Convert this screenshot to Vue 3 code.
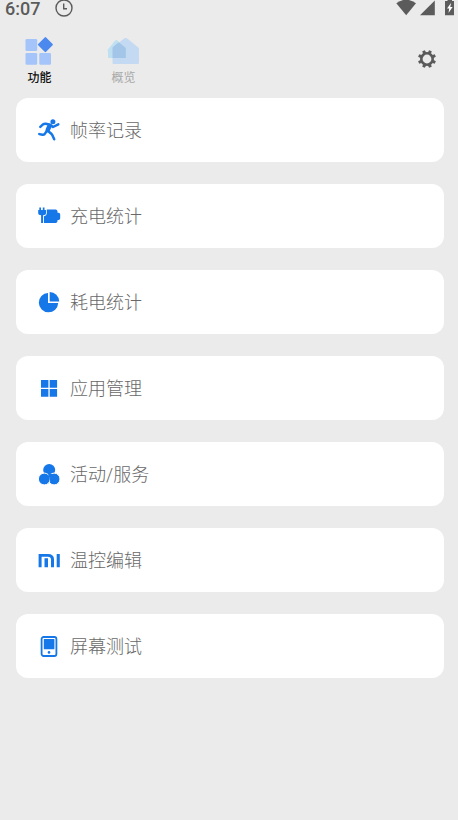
<template>
  <div class="screen">
    <header class="status-bar">
      <span class="time">6:07</span>
      <svg class="clock" width="18" height="18" viewBox="0 0 18 18">
        <circle cx="9" cy="8" r="8" />
        <path d="M8.7 3.5V8.8H12" />
      </svg>
      <svg class="signals" width="62" height="18" viewBox="0 0 62 18">
        <path d="M0.3 3.2Q10 -3.8 20 3.2L10.2 15.3Z" />
        <path d="M24 15.2L38.8 0.5V15.2Z" />
        <path d="M49 1H51.5V0H56V1H58V15.2H49Z" />
        <path class="bolt" d="M55.2 2.8L51 8.4H53.2L52.5 12.9L56.6 6.9H54.2Z" />
      </svg>
    </header>

    <nav class="tabs">
      <button
        v-for="tab in tabs"
        :key="tab.id"
        class="tab"
        :class="{ active: current === tab.id }"
        @click="current = tab.id"
      >
        <svg v-if="tab.id === 'features'" width="32" height="30" viewBox="0 0 32 30">
          <g fill="#a5c4fa">
            <rect x="2.5" y="4" width="11.7" height="12" rx="1.3" />
            <rect x="2.5" y="18" width="11.7" height="11.7" rx="1.3" />
            <rect x="16.3" y="18" width="11.7" height="11.7" rx="1.3" />
          </g>
          <rect x="16.8" y="4" width="11.2" height="11.2" rx="1" transform="rotate(45 22.4 9.6)" fill="#4b89ef" />
        </svg>
        <svg v-else width="32" height="30" viewBox="0 0 32 30">
          <path d="M0.3 15.2L8.2 5.6Q9.3 4.5 10.4 5.6L18.8 13V23H1.8Q1 23 1 22V15.8Z" fill="#bfe0f1" />
          <path d="M5.3 12.6L17.5 3.3Q18.7 2.5 19.9 3.3L31.6 12.8Q32 13.2 32 14V28Q32 29 31 29H6.5Q5.5 29 5.5 28V14Z" fill="#c3daf2" />
          <path d="M5.5 12.6L10.8 8Q11.8 7.2 12.8 8L18.8 13V23H5.5Z" fill="#a3c5e7" />
        </svg>
        <span>{{ tab.name }}</span>
      </button>

      <svg class="settings" width="20" height="20" viewBox="0 0 20 20">
        <circle cx="10" cy="10" r="5.7" />
        <path
          v-for="n in 8"
          :key="n"
          d="M8.6 1H11.4L11.7 4H8.3Z"
          :transform="`rotate(${n * 45 + 22.5} 10 10)`"
        />
      </svg>
    </nav>

    <main class="list">
      <div v-for="item in items" :key="item.icon" class="card">
        <svg class="icon" width="24" height="24" viewBox="0 0 24 24">
          <template v-if="item.icon === 'run'">
            <circle cx="15.9" cy="3.8" r="2.5" />
            <path class="line" d="M3.3 8.8L6 6.3Q7.2 5.6 8.8 5.8L13.2 6.7L16 9L21.3 6.3" />
            <path class="line thick" d="M12.5 8L10.7 12" />
            <path class="line" d="M9.8 13L7.6 16.1Q6.8 17 5.5 16.8L2.3 16.1M10.7 12.8L14.3 15.8Q15 16.4 15.4 17.3L17.2 21.3" />
          </template>
          <template v-else-if="item.icon === 'charge'">
            <path d="M2.3 3.6H4V6H5.8V3.6H7.5V6H9V9.5Q9 11 6.1 11.3V19H4.1V11.3Q1.2 11 1.2 9.5V6H2.3Z" />
            <path d="M9.8 5.5H18.7Q20.2 5.5 20.5 7.2V8.7H21.5Q23.2 9 23.2 10.5V14.3Q23.2 15.7 21.5 16H20.5V17.2Q20.2 18.9 18.7 18.9H7V12.3Q9.8 11.7 9.8 9.5Z" />
          </template>
          <template v-else-if="item.icon === 'pie'">
            <path d="M11 2.9A9.7 9.7 0 1 0 21.2 13H11Z" />
            <path d="M12.7 2A9.7 9.7 0 0 1 22.2 11.5H12.7Z" />
          </template>
          <path v-else-if="item.icon === 'apps'" d="M4 4H11.4V11.7H4ZM12.7 4H20.1V11.7H12.7ZM4 13.1H11.4V20.8H4ZM12.7 13.1H20.1V20.8H12.7Z" />
          <template v-else-if="item.icon === 'services'">
            <circle cx="12.2" cy="8" r="6" />
            <circle class="cut" cx="17.1" cy="17" r="5.9" />
            <circle class="cut" cx="7.3" cy="17" r="5.9" />
            <path d="M10.8 12.6L14.8 11.7L17 17L13.2 19.2Q12.6 14.8 10.8 12.6Z" />
          </template>
          <path v-else-if="item.icon === 'mi'" d="M1.6 6H11Q17 6 17 11.5V19.2H14V11.8Q14 8.8 11 8.8H4.6V19.2H1.6ZM7.5 10.3H11V19.2H7.5ZM19.7 6H22.8V19.2H19.7Z" />
          <template v-else>
            <rect class="frame" x="4.6" y="3" width="14.8" height="19" rx="2" />
            <rect x="6.8" y="5.1" width="10.6" height="10.2" rx="0.5" />
            <circle cx="12" cy="18.4" r="1.3" />
          </template>
        </svg>
        <span class="label">{{ item.name }}</span>
      </div>
    </main>
  </div>
</template>

<script setup>
import { ref } from 'vue';

const current = ref('features');

const tabs = [
  { id: 'features', name: '功能' },
  { id: 'overview', name: '概览' },
];

const items = [
  { icon: 'run', name: '帧率记录' },
  { icon: 'charge', name: '充电统计' },
  { icon: 'pie', name: '耗电统计' },
  { icon: 'apps', name: '应用管理' },
  { icon: 'services', name: '活动/服务' },
  { icon: 'mi', name: '温控编辑' },
  { icon: 'screen', name: '屏幕测试' },
];
</script>

<style>
body {
  margin: 0;
  background: #ebebeb;
}
</style>

<style scoped>
.screen {
  box-sizing: border-box;
  height: 820px;
  overflow: hidden;
  background: #ebebeb;
  font-family: Roboto, "Noto Sans CJK SC", sans-serif;
}

.status-bar {
  display: flex;
  height: 18px;
  padding: 0 0 0 5px;
  color: #5b5b5b;
}

.time {
  width: 50px;
  font-size: 18px;
  font-weight: 500;
  line-height: 18px;
}

.clock {
  fill: none;
  stroke: #5b5b5b;
  stroke-width: 1.4;
}

.signals {
  margin-left: auto;
  fill: #5b5b5b;
}

.bolt {
  fill: #fff;
}

.tabs {
  display: flex;
  height: 80px;
  padding: 17px 21px 0 23px;
  box-sizing: border-box;
}

.tab {
  display: flex;
  flex-direction: column;
  width: 32px;
  margin-right: 52px;
  padding: 0;
  border: none;
  background: none;
  color: #a8a8a8;
  font-family: inherit;
  font-size: 12px;
  line-height: 16px;
  text-align: center;
}

.tab span {
  margin-top: 5px;
  padding-left: 1px;
}

.tab.active {
  color: #111;
  font-weight: 500;
}

.settings {
  margin: 14px 0 0 auto;
  fill: #5b5b5b;
}

.settings circle {
  fill: none;
  stroke: #5b5b5b;
  stroke-width: 2.6;
}

.list {
  display: flex;
  flex-direction: column;
  gap: 22px;
  padding: 0 14.5px 0 16px;
}

.card {
  display: flex;
  align-items: center;
  height: 64px;
  padding-left: 21px;
  box-sizing: border-box;
  border-radius: 12px;
  background: #fff;
}

.icon {
  fill: #1677e8;
}

.line {
  fill: none;
  stroke: #1677e8;
  stroke-width: 2.5;
  stroke-linecap: round;
  stroke-linejoin: round;
}

.thick {
  stroke-width: 4.4;
}

.cut {
  stroke: #fff;
  stroke-width: 1;
}

.frame {
  fill: none;
  stroke: #1677e8;
  stroke-width: 1.8;
}

.label {
  margin-left: 9px;
  padding-top: 2px;
  color: #686868;
  font-size: 18px;
  font-weight: 300;
  line-height: 26px;
}
</style>
